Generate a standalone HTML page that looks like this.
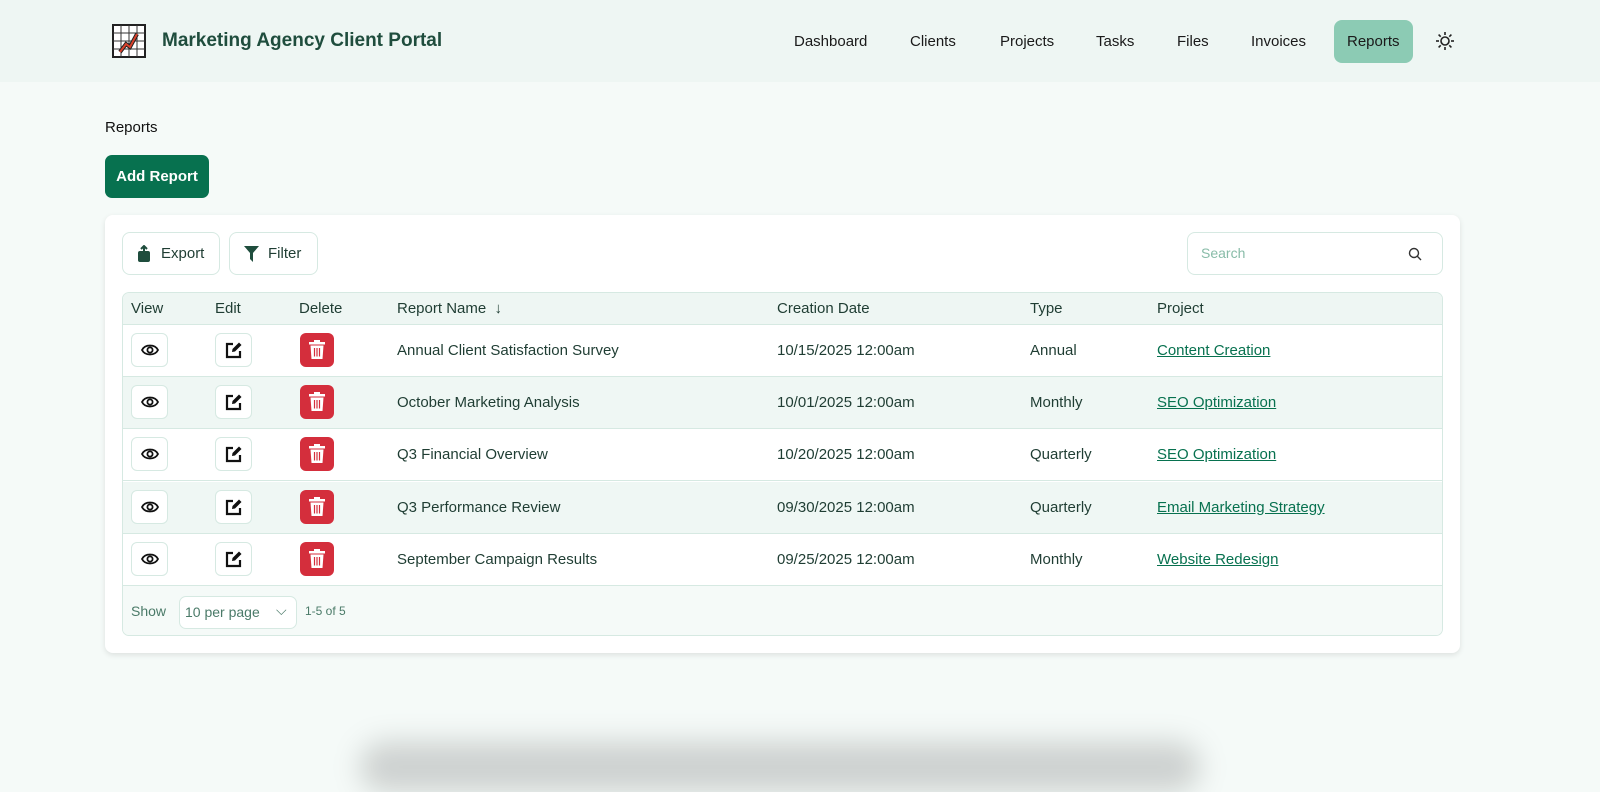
<!DOCTYPE html>
<html><head><style>
*{box-sizing:border-box;margin:0;padding:0}
body{width:1600px;height:765px;overflow:hidden;background:#f5faf8;font-family:"Liberation Sans",sans-serif;color:#1f3d33;position:relative}
.hdr{position:absolute;left:0;top:0;width:1600px;height:82px;background:#eef6f3}
.logo{position:absolute;left:112px;top:24px}
.title{position:absolute;left:162px;top:30px;font-size:19px;font-weight:bold;color:#1f4d3d}
.nav a{position:absolute;top:33px;font-size:15px;color:#1a1a1a;text-decoration:none}
.active{position:absolute;left:1334px;top:20px;width:79px;height:43px;background:#8ccbb4;border-radius:8px}
.abs{position:absolute}
.btn{position:absolute;background:#07714f;color:#fff;font-weight:bold;font-size:15px;border-radius:7px;left:105px;top:155px;width:104px;height:43px;line-height:43px;text-align:center}
.card{position:absolute;left:105px;top:215px;width:1355px;height:438px;background:#fff;border-radius:8px;box-shadow:0 2px 6px rgba(0,0,0,.1)}
.ob{position:absolute;border:1.5px solid #d6e9e2;border-radius:8px;background:#fff;font-size:15px}
.tbl{position:absolute;left:122px;top:292px;width:1321px;height:344px;border:1.5px solid #d6e9e2;border-radius:7px;overflow:hidden}
.row{position:absolute;left:0;width:100%;border-bottom:1.5px solid #d6e9e2;font-size:15px}
.row span{position:absolute}
.ib{position:absolute;width:37px;height:34px;border:1.5px solid #d6e9e2;border-radius:6px;background:#fff}
.del{position:absolute;left:177px;width:34px;height:34px;background:#d42e3c;border-radius:6px}
a.l{color:#07714f;text-decoration:underline}
</style></head><body>
<div class="hdr"></div>
<svg class="logo" width="34" height="34" viewBox="0 0 34 34"><rect x="1" y="1" width="32" height="32" fill="#fff" stroke="#222" stroke-width="2"/><g stroke="#333" stroke-width="1"><line x1="9" y1="1" x2="9" y2="33"/><line x1="17" y1="1" x2="17" y2="33"/><line x1="25" y1="1" x2="25" y2="33"/><line x1="1" y1="9" x2="33" y2="9"/><line x1="1" y1="17" x2="33" y2="17"/><line x1="1" y1="25" x2="33" y2="25"/></g><path d="M8 28 L14 20 L18 23 L25 10" stroke="#222" stroke-width="4" fill="none"/><path d="M8 28 L14 20 L18 23 L25 10" stroke="#d9402b" stroke-width="2" fill="none"/></svg>
<div class="title">Marketing Agency Client Portal</div>
<div class="active"></div>
<div class="nav"><a style="left:794px">Dashboard</a><a style="left:910px">Clients</a><a style="left:1000px">Projects</a><a style="left:1096px">Tasks</a><a style="left:1177px">Files</a><a style="left:1251px">Invoices</a><a style="left:1347px">Reports</a></div>
<svg class="abs" style="left:1436px;top:32px" width="18" height="18" viewBox="0 0 18 18"><circle cx="9" cy="9" r="4" fill="none" stroke="#222" stroke-width="1.6"/><g stroke="#222" stroke-width="1.6"><line x1="9" y1="0" x2="9" y2="3"/><line x1="9" y1="15" x2="9" y2="18"/><line x1="0" y1="9" x2="3" y2="9"/><line x1="15" y1="9" x2="18" y2="9"/><line x1="2.6" y1="2.6" x2="4.7" y2="4.7"/><line x1="13.3" y1="13.3" x2="15.4" y2="15.4"/><line x1="2.6" y1="15.4" x2="4.7" y2="13.3"/><line x1="13.3" y1="4.7" x2="15.4" y2="2.6"/></g></svg>
<div class="abs" style="left:105px;top:119px;font-size:15px;color:#111">Reports</div>
<div class="btn">Add Report</div>
<div class="card"></div>
<div class="ob" style="left:122px;top:232px;width:98px;height:43px"><svg class="abs" style="left:15px;top:12px" width="12" height="17" viewBox="0 0 12 17"><rect x="0" y="6" width="12" height="11" rx="2" fill="#1f4d3d"/><path d="M6 10V1M3 4l3-3 3 3" stroke="#1f4d3d" stroke-width="2" fill="none"/></svg><span class="abs" style="left:38px;top:12px">Export</span></div>
<div class="ob" style="left:229px;top:232px;width:89px;height:43px"><svg class="abs" style="left:14px;top:13px" width="15" height="16" viewBox="0 0 15 16"><path d="M0 0H15L9 7V16L6 13V7Z" fill="#1f4d3d"/></svg><span class="abs" style="left:38px;top:12px">Filter</span></div>
<div class="ob" style="left:1187px;top:232px;width:256px;height:43px"><span class="abs" style="left:13px;top:12px;color:#88bca8;font-size:14px">Search</span><svg class="abs" style="left:220px;top:14px" width="14" height="14" viewBox="0 0 14 14"><circle cx="6" cy="6" r="4.5" fill="none" stroke="#333" stroke-width="1.4"/><line x1="9.3" y1="9.3" x2="13" y2="13" stroke="#333" stroke-width="1.4"/></svg></div>
<div class="tbl">
<div class="row" style="top:0;height:32px;background:#eef6f3"><span style="left:8px;top:7px">View</span><span style="left:92px;top:7px">Edit</span><span style="left:176px;top:7px">Delete</span><span style="left:274px;top:7px">Report Name &nbsp;↓</span><span style="left:654px;top:7px">Creation Date</span><span style="left:907px;top:7px">Type</span><span style="left:1034px;top:7px">Project</span></div>
<div id="rows"></div>
<div class="abs" style="left:0;top:293px;width:100%;height:51px;background:#f5faf8;font-size:14px;color:#4a7a68"><span class="abs" style="left:8px;top:17px">Show</span><div class="abs" style="left:56px;top:10px;width:118px;height:33px;border:1.5px solid #d6e9e2;border-radius:7px;background:#fff"><span class="abs" style="left:5px;top:7px">10 per page</span><span class="abs" style="left:96px;top:5px">⌵</span></div><span class="abs" style="left:182px;top:18px;font-size:12px">1-5 of 5</span></div>
</div>
<script>
var d=[["Annual Client Satisfaction Survey","10/15/2025 12:00am","Annual","Content Creation"],["October Marketing Analysis","10/01/2025 12:00am","Monthly","SEO Optimization"],["Q3 Financial Overview","10/20/2025 12:00am","Quarterly","SEO Optimization"],["Q3 Performance Review","09/30/2025 12:00am","Quarterly","Email Marketing Strategy"],["September Campaign Results","09/25/2025 12:00am","Monthly","Website Redesign"]];
var eye='<svg style="position:absolute;left:9px;top:8px" width="18" height="16" viewBox="0 0 18 16"><path d="M1 8C4 2 14 2 17 8C14 14 4 14 1 8Z" fill="none" stroke="#111" stroke-width="1.8"/><circle cx="9" cy="8" r="2.6" fill="none" stroke="#111" stroke-width="1.8"/></svg>';
var ed='<svg style="position:absolute;left:9px;top:7px" width="18" height="18" viewBox="0 0 18 18"><path d="M8 3H2V16H15V10" fill="none" stroke="#111" stroke-width="2.2"/><path d="M7 11L7.5 8L14 1.5L16.5 4L10 10.5Z" fill="#111"/></svg>';
var tr='<svg style="position:absolute;left:9px;top:7px" width="16" height="19" viewBox="0 0 16 19"><rect x="0" y="2" width="16" height="2.5" fill="#fff"/><rect x="5" y="0" width="6" height="3" fill="#fff"/><path d="M1.5 5.5H14.5L13.5 19H2.5Z" fill="#fff"/><g stroke="#d42e3c" stroke-width="1.2"><line x1="5.5" y1="8" x2="5.5" y2="16.5"/><line x1="8" y1="8" x2="8" y2="16.5"/><line x1="10.5" y1="8" x2="10.5" y2="16.5"/></g></svg>';
var h='';d.forEach(function(r,i){var t=32+i*52.2;h+='<div class="row" style="top:'+t+'px;height:52px;background:'+(i%2?'#eff7f4':'#fff')+'"><div class="ib" style="left:8px;top:8px">'+eye+'</div><div class="ib" style="left:92px;top:8px">'+ed+'</div><div class="del" style="top:8px">'+tr+'</div><span style="left:274px;top:17px">'+r[0]+'</span><span style="left:654px;top:17px">'+r[1]+'</span><span style="left:907px;top:17px">'+r[2]+'</span><span style="left:1034px;top:17px"><a class="l">'+r[3]+'</a></span></div>'});
document.getElementById('rows').innerHTML=h;
</script>
<div class="abs" style="left:360px;top:742px;width:840px;height:50px;background:rgba(0,0,0,.16);filter:blur(14px);border-radius:40px"></div>
</body></html>
